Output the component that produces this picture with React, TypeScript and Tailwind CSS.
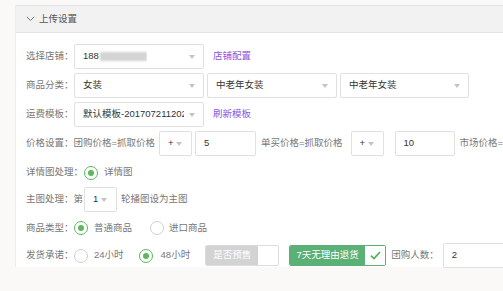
import React from "react";

const font = { fontFamily: '"Liberation Sans", "Noto Sans CJK SC", sans-serif' };

function Caret() {
  return (
    <span className="ml-auto w-0 h-0 border-l-[3.5px] border-r-[3.5px] border-t-[4px] border-l-transparent border-r-transparent border-t-[#c4c4c4]" />
  );
}

function Select({ w, children, pr = "pr-[8px]" }: { w: string; children: React.ReactNode; pr?: string }) {
  return (
    <div className={`${w} h-[25px] border border-[#e0e0e0] rounded-[2px] bg-white flex items-center pl-[8px] ${pr} text-[#333] overflow-hidden`}>
      <div className="flex items-center whitespace-nowrap overflow-hidden">{children}</div>
      <Caret />
    </div>
  );
}

function Radio({ on }: { on?: boolean }) {
  return (
    <span
      className={`shrink-0 w-[14px] h-[14px] rounded-full border-[1.5px] flex items-center justify-center bg-white ${on ? "border-[#5cb85c]" : "border-[#cfcfcf]"}`}
    >
      {on && <span className="w-[6px] h-[6px] rounded-full bg-[#5cb85c]" />}
    </span>
  );
}

export default function App() {
  return (
    <div className="w-[503px] h-[291px] overflow-hidden bg-[#faf9f7] pt-[5px] pl-[15px] text-[9.5px]" style={font}>
      <div className="bg-white border-l border-[#ececec] h-[262px]">
        <div className="h-[28px] bg-[#f2f2f2] border-y border-[#e4e4e4] flex items-center pl-[10px] text-[#555]">
          <svg width="9" height="6" viewBox="0 0 9 6" className="mr-[4px]">
            <path d="M0.8 0.8 L4.5 4.6 L8.2 0.8" fill="none" stroke="#777" strokeWidth="1" />
          </svg>
          <span>上传设置</span>
        </div>
        <div className="pl-[10px] pt-[11px] text-[#777]">
          {/* row 1 */}
          <div className="flex items-center h-[25px]">
            <span className="w-[48px]">选择店铺：</span>
            <Select w="w-[130px]">
              <span className="text-[#333]">188</span>
              <span className="ml-[1px] w-[47px] h-[9px] bg-[#d4d4d4] blur-[1.2px]" />
            </Select>
            <span className="ml-[9px] text-[#8e55dc]">店铺配置</span>
          </div>
          {/* row 2 */}
          <div className="flex items-center h-[25px] mt-[4px]">
            <span className="w-[48px]">商品分类：</span>
            <Select w="w-[130px]">女装</Select>
            <div className="ml-[3px]"><Select w="w-[130px]">中老年女装</Select></div>
            <div className="ml-[3px]"><Select w="w-[129px]">中老年女装</Select></div>
          </div>
          {/* row 3 */}
          <div className="flex items-center h-[25px] mt-[4px]">
            <span className="w-[48px]">运费模板：</span>
            <Select w="w-[130px]">
              <span className="w-[101px] overflow-hidden">默认模板-201707211202</span>
            </Select>
            <span className="ml-[9px] text-[#8e55dc]">刷新模板</span>
          </div>
          {/* row 4 */}
          <div className="flex items-center h-[25px] mt-[4px] whitespace-nowrap">
            <span>价格设置：团购价格=抓取价格</span>
            <div className="ml-[4px]"><Select w="w-[33px]" pr="pr-[9px]">+</Select></div>
            <div className="ml-[3px] w-[66px] h-[25px] border border-[#e0e0e0] rounded-[2px] flex items-center pl-[8px] text-[#333]">5</div>
            <span className="ml-[5px]">单买价格=抓取价格</span>
            <div className="ml-[8px]"><Select w="w-[33px]" pr="pr-[9px]">+</Select></div>
            <div className="ml-[11px] w-[66px] h-[25px] border border-[#e0e0e0] rounded-[2px] flex items-center pl-[8px] text-[#333]">10</div>
            <span className="ml-[4px]">市场价格=</span>
          </div>
          {/* row 5 */}
          <div className="flex items-center h-[25px] mt-[4px]">
            <span className="w-[58px]">详情图处理：</span>
            <Radio on />
            <span className="ml-[6px]">详情图</span>
          </div>
          {/* row 6 */}
          <div className="flex items-center h-[25px] mt-[2px]">
            <span className="w-[58px]">主图处理：第</span>
            <Select w="w-[33px]" pr="pr-[9px]">1</Select>
            <span className="ml-[4px]">轮播图设为主图</span>
          </div>
          {/* row 7 */}
          <div className="flex items-center h-[24px] mt-[4px]">
            <span className="w-[48px]">商品类型：</span>
            <Radio on />
            <span className="ml-[6px]">普通商品</span>
            <span className="ml-[18px]"><Radio /></span>
            <span className="ml-[5px]">进口商品</span>
          </div>
          {/* row 8 */}
          <div className="flex items-center h-[25px] mt-[3px] whitespace-nowrap [&>*]:shrink-0">
            <span className="w-[48px]">发货承诺：</span>
            <Radio />
            <span className="ml-[6px]">24小时</span>
            <span className="ml-[15px]"><Radio on /></span>
            <span className="ml-[8px]">48小时</span>
            <div className="ml-[15px] flex h-[21px] border border-[#dcdcdc] rounded-[2px] overflow-hidden">
              <span className="w-[52px] bg-[#d3d3d3] text-white flex items-center justify-center">是否预售</span>
              <span className="w-[20px] bg-white" />
            </div>
            <div className="ml-[10px] flex h-[21px] border border-[#5bb075] rounded-[2px] overflow-hidden">
              <span className="w-[75px] bg-[#5bb075] text-white flex items-center justify-center">7天无理由退货</span>
              <span className="w-[20px] bg-white flex items-center justify-center">
                <svg width="11" height="9" viewBox="0 0 11 9">
                  <path d="M1 4.6 L4 7.6 L10 1" fill="none" stroke="#4caf50" strokeWidth="1.6" />
                </svg>
              </span>
            </div>
            <span className="ml-[5px]">团购人数：</span>
            <div className="ml-[4px] w-[70px] h-[25px] border border-[#e0e0e0] rounded-[2px] flex items-center pl-[8px] text-[#333]">2</div>
          </div>
        </div>
      </div>
    </div>
  );
}
